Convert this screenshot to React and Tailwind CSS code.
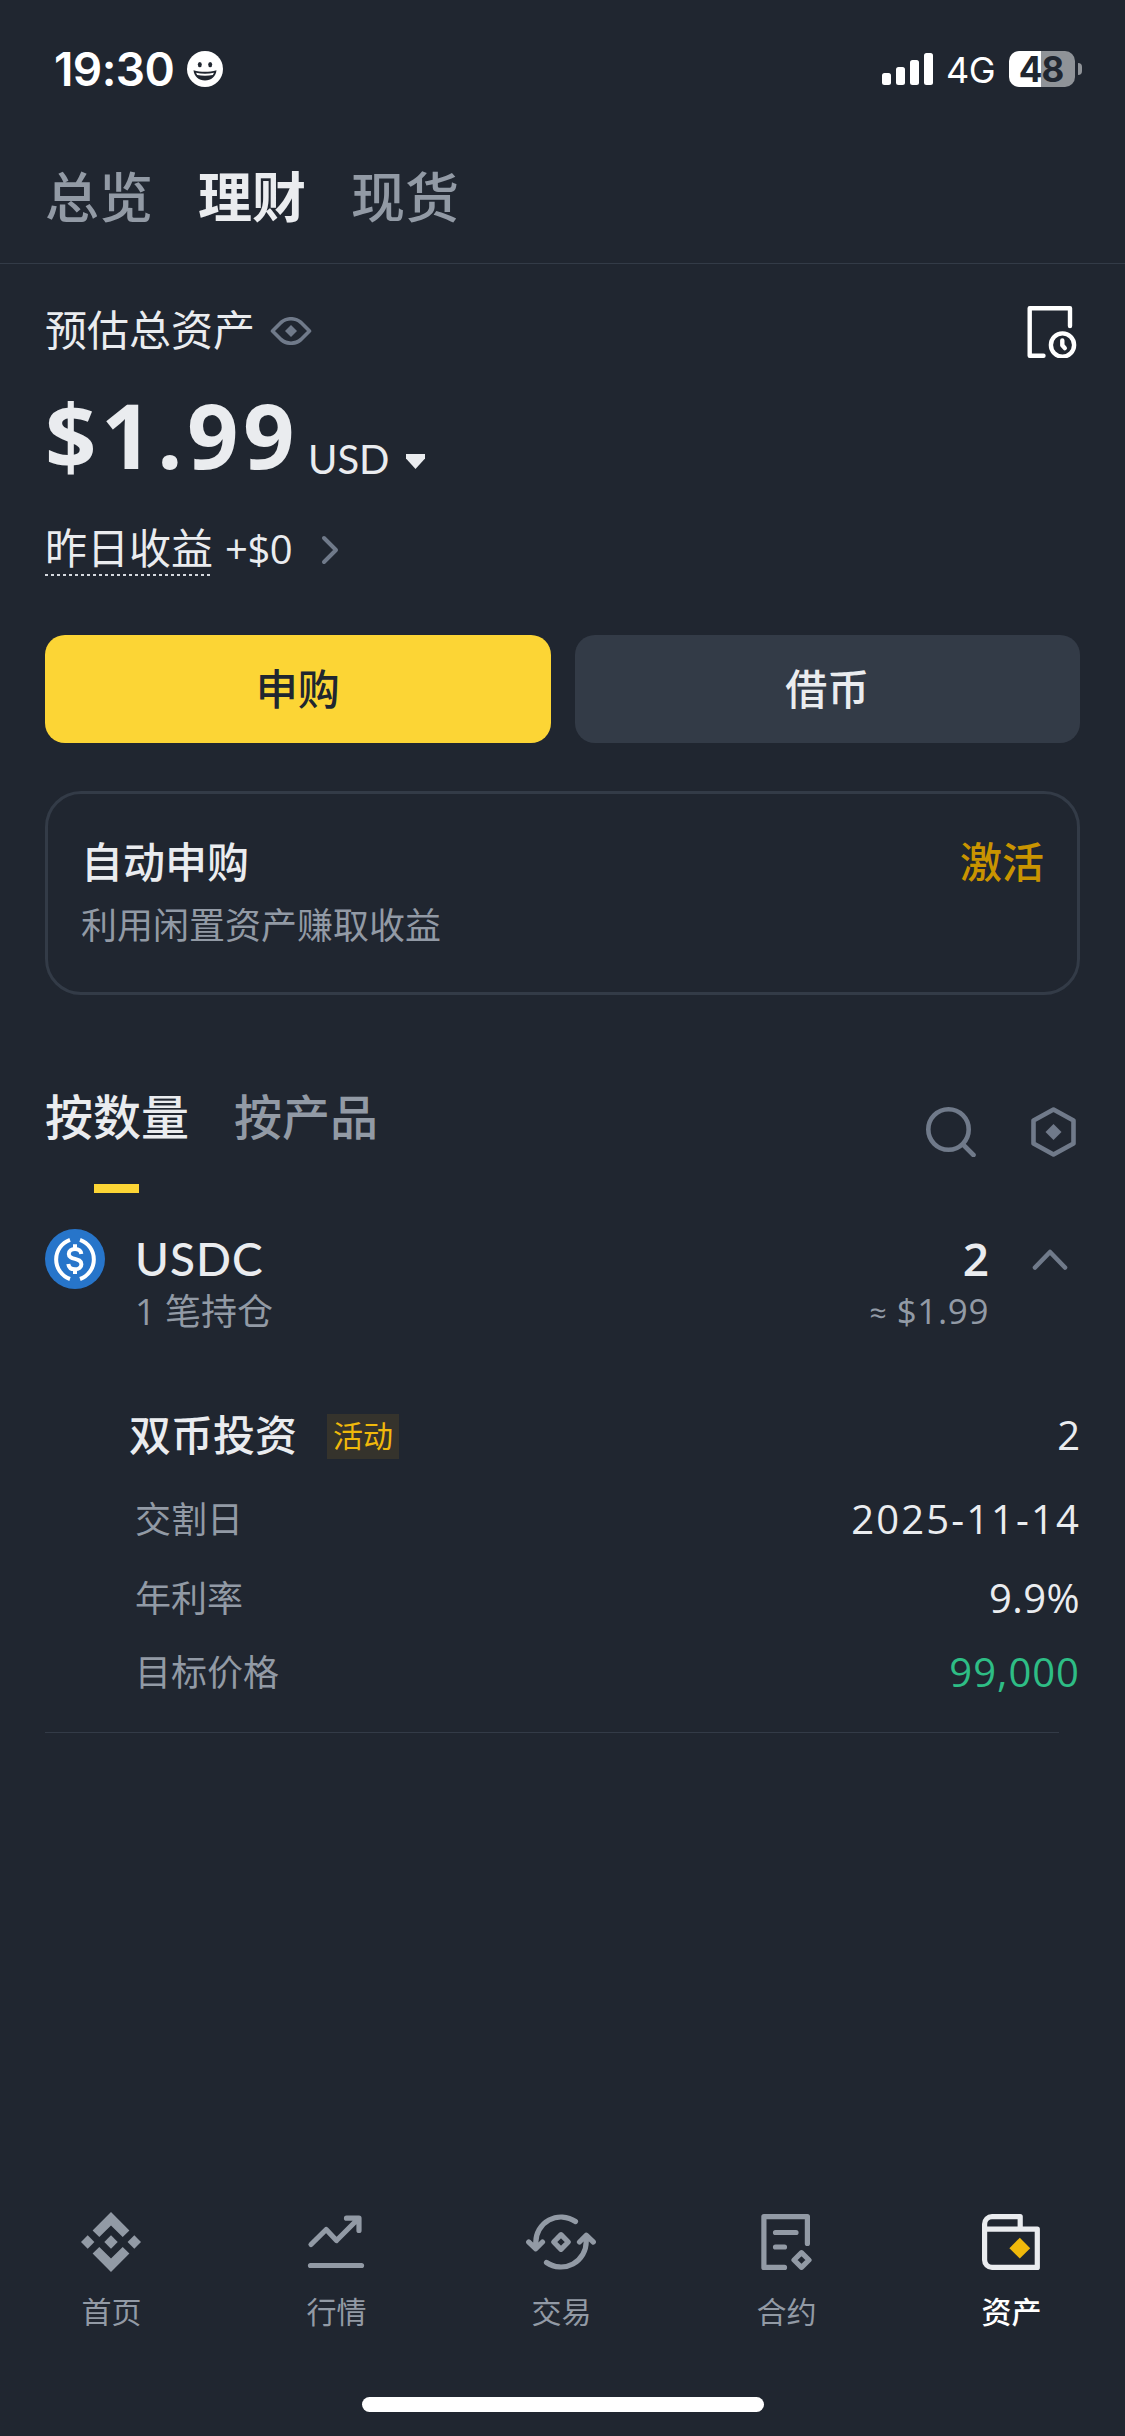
import React from "react";

const StatusBar = () => (
    <div className="h-[138px] shrink-0 flex items-center justify-between pl-[54px] pr-[43px] font-['Inter',sans-serif] text-white">
        <div className="flex items-center gap-[13px]">
            <span className="text-[46px] leading-none font-semibold tracking-[-0.6px]">19:30</span>
            <svg width="36" height="36" viewBox="0 0 36 36">
                <circle cx="18" cy="18" r="18" fill="#fff" />
                <ellipse cx="12.8" cy="13.6" rx="2" ry="2.7" fill="#202630" />
                <ellipse cx="23.2" cy="13.6" rx="2" ry="2.7" fill="#202630" />
                <path d="M6.5 19.2c7.5 2.2 15.500 2.200 23 0c-.6 6.300-5.500 10.300-11.500 10.300S7.100 25.500 6.500 19.200z" fill="#202630" />
                <path d="M9 21.700c6 1.500 12 1.500 18 0l-1.200 2.200c-5 1-10.600 1-15.600 0z" fill="#fff" />
            </svg>
        </div>

        <div className="flex items-center">
            <svg width="51" height="32" viewBox="0 0 51 32" fill="#fff">
                <rect x="0" y="20" width="9" height="12" rx="2.500" />
                <rect x="14" y="14" width="9" height="18" rx="2.500" />
                <rect x="28" y="7" width="9" height="25" rx="2.500" />
                <rect x="42" y="0" width="9" height="32" rx="2.500" />
            </svg>
            <span className="ml-[13px] w-[63px] text-[36px] leading-[38px] pt-[2px] tracking-[-0.5px]">4G</span>
            <div className="w-[66px] h-[36px] rounded-[10px] bg-[linear-gradient(90deg,#fff_32px,#8f9398_32px)] flex items-center justify-center pr-[2px] text-[35px] leading-[36px] font-bold tracking-[-1px] text-[#202630]">
                48
            </div>
            <div className="ml-[3px] w-[4px] h-[12px] rounded-r-full bg-[#8f9398]" />
        </div>
    </div>
);

const EyeIcon = () => (
    <svg width="42" height="28" viewBox="0 0 42 28" fill="none">
        <path d="M2.500 14L11 5.500c6-5 14-5 20 0L39.500 14L31 22.500c-6 5-14 5-20 0z" stroke="#707a8a" strokeWidth="3.600" strokeLinejoin="round" />
        <path d="M21 8l6 6l-6 6l-6-6z" fill="#707a8a" />
    </svg>
);

const HistoryIcon = () => (
    <svg width="50" height="52" viewBox="0 0 50 52" fill="none" stroke="#fff" strokeWidth="4.400" strokeLinecap="round" strokeLinejoin="round">
        <path d="M16.500 49.800H2.700V2.200H43V20" />
        <circle cx="35.500" cy="39" r="11.600" />
        <path d="M35.300 34.500v4.800l2.500 2.800" />
    </svg>
);

const UsdcIcon = () => (
    <svg width="60" height="60" viewBox="0 0 60 60" fill="none">
        <circle cx="30" cy="30" r="30" fill="#2775ca" />
        <g stroke="#fff" strokeWidth="4">
            <path d="M25 10.800a20.800 20.800 0 0 0 0 39.200" />
            <path d="M35 10.800a20.800 20.800 0 0 1 0 39.200" />
            <path d="M36.300 24.900c-.4-3.400-2.800-5-6.300-5c-3.700 0-6.200 1.900-6.200 5c0 6.800 12.600 3.200 12.600 10.300c0 3.300-2.600 5.100-6.400 5.100c-3.900 0-6.300-1.800-6.700-5.300" />
            <path d="M30 15.200v5M30 40v5" />
        </g>
    </svg>
);

const HomeIcon = () => (
    <svg width="60" height="60" viewBox="0 0 60 60" fill="#929aa5">
        <path d="M30 0L48.400 18.400L41.700 25.100L30 13.400L18.300 25.100L11.600 18.400z" />
        <path d="M30 60L48.400 41.600L41.700 34.900L30 46.600L18.300 34.900L11.600 41.600z" />
        <path d="M30 23.300L36.700 30L30 36.700L23.300 30z" />
        <path d="M6.700 23.300L13.400 30L6.700 36.700L0 30z" />
        <path d="M53.300 23.300L60 30L53.300 36.700L46.600 30z" />
    </svg>
);

const MarketIcon = () => (
    <svg width="58" height="54" viewBox="0 0 58 54" fill="none" stroke="#929aa5" strokeWidth="5.200" strokeLinecap="round" strokeLinejoin="round">
        <path d="M4 29.500L19.200 14.500L29.500 25.500L51 4M39.500 3.200H52V15.500" />
        <path d="M3.500 50.500H54.500" />
    </svg>
);

const TradeIcon = () => (
    <svg width="70" height="56" viewBox="0 0 70 56" fill="none" stroke="#929aa5" strokeWidth="5.200" strokeLinecap="round" strokeLinejoin="round">
        <path d="M49.500 7.500A25.300 25.300 0 0 0 9.800 29V34M2.700 28L9.800 34.800L16.500 28" />
        <path d="M20.500 48.500A25.300 25.300 0 0 0 60.200 27V22M53.500 28L60.200 21.200L67.300 28" />
        <path d="M35 20.700L42.300 28L35 35.300L27.700 28z" />
    </svg>
);

const FuturesIcon = () => (
    <svg width="51" height="56" viewBox="0 0 51 56" fill="none" stroke="#929aa5" strokeWidth="5.200" strokeLinecap="round" strokeLinejoin="round">
        <path d="M23.500 53.400H2.900V2.600H46.400V29.500" />
        <path d="M14.500 18.500H35M14.500 33H23.500" />
        <path d="M40.500 38.700L48 46L40.500 53.300L33 46z" />
    </svg>
);

const WalletIcon = () => (
    <svg width="58" height="56" viewBox="0 0 58 56" fill="none">
        <g stroke="#eaecef" strokeWidth="5.200" strokeLinejoin="round">
            <path d="M2.600 15.200V46A7.400 7.400 0 0 0 10 53.400H55.300V15.200z" />
            <path d="M2.600 15.200V10A7.400 7.400 0 0 1 10 2.600H38.200V15.200" />
        </g>
        <path d="M37.800 23.800L48.200 34.200L37.800 44.600L27.400 34.200z" fill="#f0b90b" />
    </svg>
);

const detailRows = [
    { label: "交割日", value: "2025-11-14", row: "h-[80px]", color: "text-[#eaecef] tracking-[2.1px] -mr-[1px]" },
    { label: "年利率", value: "9.9%", row: "h-[78px]", color: "text-[#eaecef] tracking-[0.4px]" },
    { label: "目标价格", value: "99,000", row: "h-[70px]", color: "text-[#2ebd85] tracking-[1px]" },
];

const navItems = [
    { label: "首页", icon: HomeIcon },
    { label: "行情", icon: MarketIcon },
    { label: "交易", icon: TradeIcon },
    { label: "合约", icon: FuturesIcon },
    { label: "资产", icon: WalletIcon, active: true },
];

const App = () => {
    return (
        <div className="w-[1125px] h-[2436px] bg-[#202630] text-[#eaecef] font-['Lato','Noto_Sans_CJK_SC',sans-serif] flex flex-col overflow-hidden">
            <StatusBar />

            {/* Account tabs */}
            <div className="h-[126px] shrink-0 flex items-center gap-[45px] px-[45px] pb-[5px] border-b border-[#333b47] text-[54px] leading-none font-medium text-[#929aa5]">
                <span>总览</span>
                <span className="font-bold text-[#eaecef]">理财</span>
                <span>现货</span>
            </div>

            <div className="px-[45px] flex flex-col">
                {/* Balance */}
                <div className="h-[132px] flex items-center justify-between">
                    <div className="flex items-center gap-[15px]">
                        <span className="text-[42px] leading-none">预估总资产</span>
                        <div className="pt-[2px]">
                            <EyeIcon />
                        </div>
                    </div>
                    <div className="pt-[4px] pr-[3px]">
                        <HistoryIcon />
                    </div>
                </div>
                <div className="h-[82px] flex items-start">
                    <span className="w-[263px] text-[90px] leading-[76px] font-bold tracking-[4.500px] font-['Open_Sans',sans-serif]">$1.99</span>
                    <span className="mt-[43px] w-[98px] text-[40px] leading-none">USD</span>
                    <svg className="mt-[56px]" width="20" height="22" viewBox="0 0 20 22" fill="#eaecef">
                        <path d="M0 2H19V6.500L9.500 17L0 6.500z" />
                    </svg>
                </div>
                <div className="h-[140px] flex items-center">
                    <span className="relative text-[42px] leading-none">
                        昨日收益
                        <svg className="absolute left-0 -bottom-[7px]" width="166" height="2" viewBox="0 0 166 2">
                            <path d="M0 1H166" stroke="#d5d9df" strokeWidth="2" strokeDasharray="3 3" />
                        </svg>
                    </span>
                    <span className="ml-[12px] w-[96px] pt-[2px] text-[40px] leading-none tracking-[-0.5px] font-['Open_Sans',sans-serif]">+$0</span>
                    <svg className="mt-[3px]" width="18" height="30" viewBox="0 0 18 30" fill="none">
                        <path d="M3 3L15 15L3 27" stroke="#707a8a" strokeWidth="4" strokeLinecap="round" strokeLinejoin="round" />
                    </svg>
                </div>

                <div className="mt-[17px] grid grid-cols-2 gap-[24px] text-[42px] font-medium">
                    <button className="h-[108px] rounded-[20px] bg-[#fcd535] text-[#202630]">申购</button>
                    <button className="h-[108px] rounded-[20px] bg-[#333b47]">借币</button>
                </div>

                {/* Auto-subscribe */}
                <div className="mt-[48px] h-[204px] px-[33px] pt-[38px] border-[3px] border-[#333b47] rounded-[36px]">
                    <div className="flex justify-between text-[42px] leading-[60px] font-medium">
                        <span>自动申购</span>
                        <span className="text-[#c99400]">激活</span>
                    </div>
                    <div className="mt-[8px] text-[36px] leading-[50px] text-[#929aa5]">利用闲置资产赚取收益</div>
                </div>

                {/* Position tabs */}
                <div className="mt-[78px] flex items-start justify-between">
                    <div className="flex gap-[45px] text-[48px] leading-[88px] font-medium">
                        <div className="flex flex-col">
                            <span>按数量</span>
                            <div className="mt-[23px] ml-[49px] w-[45px] h-[9px] bg-[#fcd535]" />
                        </div>
                        <span className="text-[#929aa5]">按产品</span>
                    </div>
                    <div className="mt-[34px] flex items-center gap-[55px] pr-[4px]">
                        <svg width="50" height="50" viewBox="0 0 50 50" fill="none" stroke="#707a8a" strokeWidth="4.600" strokeLinecap="round">
                            <circle cx="22.500" cy="22.500" r="20.200" />
                            <path d="M37 37.500L47.500 48" />
                        </svg>
                        <svg width="45" height="50" viewBox="0 0 45 50" fill="none">
                            <path d="M22.500 2.500L42.500 13.500V36.500L22.500 47.500L2.500 36.500V13.500z" stroke="#707a8a" strokeWidth="4.600" strokeLinejoin="round" />
                            <path d="M22.500 17L30.500 25L22.500 33L14.500 25z" fill="#707a8a" />
                        </svg>
                    </div>
                </div>

                {/* USDC position */}
                <div className="mt-[36px] h-[104px] flex items-start">
                    <UsdcIcon />
                    <div className="ml-[30px] flex-1">
                        <div className="text-[46px] leading-[59px] font-medium tracking-[1px]">USDC</div>
                        <div className="mt-[2px] text-[36px] leading-[44px] text-[#929aa5] font-['Open_Sans','Noto_Sans_CJK_SC',sans-serif]">1 笔持仓</div>
                    </div>
                    <div className="text-right font-['Open_Sans',sans-serif]">
                        <div className="text-[46px] leading-[59px] font-semibold">2</div>
                        <div className="mt-[1px] text-[35px] leading-[44px] tracking-[0.6px] text-[#929aa5]">
                            <span className="text-[30px]">≈</span> $1.99
                        </div>
                    </div>
                    <svg className="mt-[20px] ml-[43px] mr-[12px]" width="36" height="22" viewBox="0 0 36 22" fill="none">
                        <path d="M3 18.500L18 3L33 18.500" stroke="#707a8a" strokeWidth="4.600" strokeLinecap="round" strokeLinejoin="round" />
                    </svg>
                </div>

                <div className="mt-[66px] h-[72px] pl-[84px] flex items-center text-[42px] leading-none">
                    <span className="font-medium">双币投资</span>
                    <span className="mt-[2px] ml-[30px] w-[72px] h-[45px] bg-[#35332c] text-[#f0b90b] text-[30px] leading-[43px] text-center">活动</span>
                    <span className="ml-auto text-[40px] font-['Open_Sans',sans-serif]">2</span>
                </div>
                <div className="mt-[8px]">
                    {detailRows.map(({ label, value, row, color }) => (
                        <div key={label} className={`${row} pl-[90px] flex items-center justify-between leading-none`}>
                            <span className="text-[36px] text-[#929aa5]">{label}</span>
                            <span className={`text-[40px] font-['Open_Sans',sans-serif] ${color}`}>{value}</span>
                        </div>
                    ))}
                </div>
                <div className="mt-[25px] mr-[21px] h-px bg-[#333b47]" />
            </div>

            {/* Bottom nav */}
            <div className="mt-auto grid grid-cols-5">
                {navItems.map(({ label, icon: Icon, active }) => (
                    <div key={label} className="flex flex-col items-center pr-[2px]">
                        <div className="h-[70px] flex items-center pr-[1px]">
                            <Icon />
                        </div>
                        <span className={`mt-[9px] text-[30px] leading-[50px] ${active ? "font-medium text-white" : "text-[#929aa5]"}`}>{label}</span>
                    </div>
                ))}
            </div>
            <div className="mt-[61px] mb-[24px] mx-auto w-[402px] h-[15px] shrink-0 rounded-full bg-white" />
        </div>
    );
};

export default App;
